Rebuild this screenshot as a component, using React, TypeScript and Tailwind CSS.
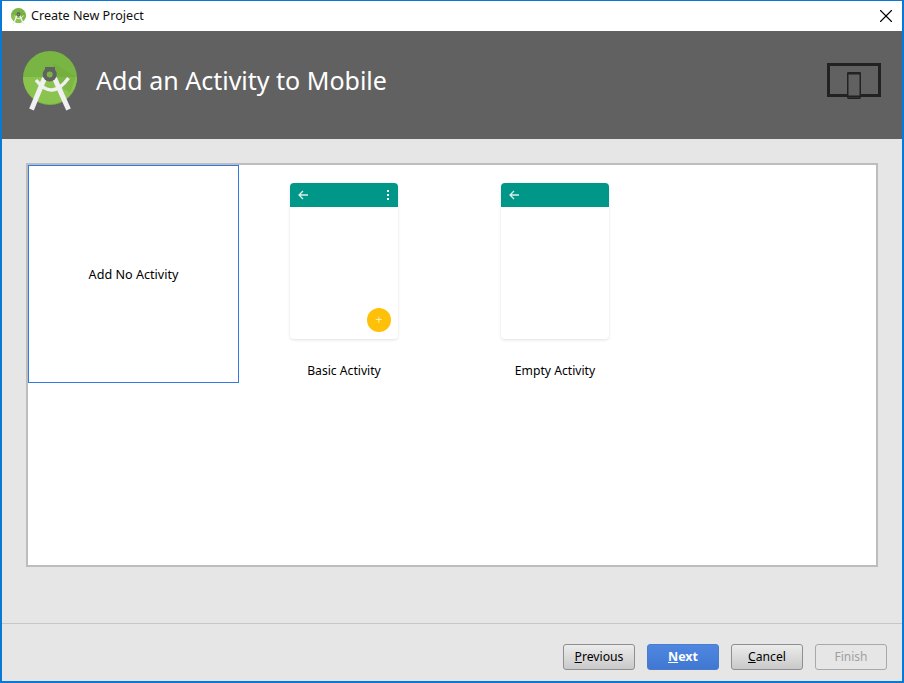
import React from 'react';
import { X } from 'lucide-react';

const font = 'font-["Noto_Sans","Open_Sans",sans-serif]';

const AndroidLogo: React.FC<{ size: number }> = ({ size }) => (
  <svg width={size} height={(size * 60) / 54} viewBox="0 0 54 60" fill="none">
    <circle cx="27" cy="27" r="27" fill="#78b543" />
    <path d="M0 26a27 27 0 0 0 54 0z" fill="#8bc34f" />
    <path d="M30 12 53 26 47 42 30 30z" fill="#6ea83c" opacity="0.45" />
    <path d="M13 29Q29 50 45.5 27" stroke="#f0f0f0" strokeWidth="3.4" />
    <path d="M21.5 27 8.5 58.5" stroke="#f0f0f0" strokeWidth="5" />
    <path d="M31.5 27 45.5 58.5" stroke="#f0f0f0" strokeWidth="5" />
    <path d="M22 16h10v5l-1 3H23l-1-3z" fill="#616161" />
    <circle cx="26.7" cy="23.5" r="7" fill="#616161" />
    <circle cx="26.7" cy="23.5" r="3" fill="#78b543" />
  </svg>
);

const DevicesIcon: React.FC = () => (
  <svg width="54" height="36" viewBox="0 0 54 36" fill="none">
    <path d="M1.5 1.5h51v31h-51z" stroke="#222" strokeWidth="3" />
    <rect x="20.75" y="9.75" width="12.5" height="25.5" rx="1" fill="#616161" stroke="#222" strokeWidth="1.5" />
    <path d="M20 10.5h14M20 33.5h14" stroke="#222" strokeWidth="2" />
  </svg>
);

const BackArrow: React.FC = () => (
  <svg width="10" height="10" viewBox="0 0 10 10" fill="none" stroke="#d9f0ec" strokeWidth="1.3">
    <path d="M10 5H1M5 1 1 5l4 4" />
  </svg>
);

const Template: React.FC<{ title: string; basic?: boolean }> = ({ title, basic }) => (
  <div className="w-[211px] h-[218px] flex flex-col items-center pt-[18px] pr-px">
    <div className="relative w-[108px] h-[156px] bg-white rounded-[4px] overflow-hidden shadow-[0_1px_3px_rgba(0,0,0,0.12)]">
      <div className="h-6 bg-[#009688] flex items-center justify-between pl-2 pr-[9px]">
        <BackArrow />
        {basic && (
          <div className="flex flex-col gap-[2px]">
            <span className="w-[2px] h-[2px] bg-white" />
            <span className="w-[2px] h-[2px] bg-white" />
            <span className="w-[2px] h-[2px] bg-white" />
          </div>
        )}
      </div>
      {basic && (
        <div className="absolute right-[7px] bottom-[7px] w-6 h-6 rounded-full bg-[#ffc107] flex items-center justify-center text-[#ffeeb5] text-[12px] leading-none">
          +
        </div>
      )}
    </div>
    <div className="mt-[23px] text-[12.15px] leading-[18px] text-black">{title}</div>
  </div>
);

const Button: React.FC<{ children: React.ReactNode; kind?: 'primary' | 'disabled' }> = ({ children, kind }) => {
  if (kind === 'primary') {
    return (
      <button className="w-[72px] h-[26px] pt-px rounded-[3px] border border-[#4a7cc7] bg-gradient-to-b from-[#4f87e0] to-[#3f77d2] text-white text-[12.5px] font-bold">
        {children}
      </button>
    );
  }
  if (kind === 'disabled') {
    return (
      <button className="w-[72px] h-[26px] pt-px rounded-[3px] border border-[#a8a8a8] bg-[#e6e6e6] text-[#a0a0a0] text-[12px]">
        {children}
      </button>
    );
  }
  return (
    <button className="w-[72px] h-[26px] pt-px rounded-[3px] border border-[#8f8f8f] bg-gradient-to-b from-[#ececec] to-[#c9c9c9] text-black text-[12.2px]">
      {children}
    </button>
  );
};

export default function App() {
  return (
    <div className={`w-[904px] h-[683px] flex flex-col overflow-hidden border-t border-x-2 border-b-2 border-[#0a78d7] bg-[#e6e6e6] ${font}`}>
      {/* Title bar */}
      <div className="h-[30px] shrink-0 bg-white flex items-center pl-[9px] pr-[5px]">
        <AndroidLogo size={15} />
        <span className="ml-[5px] text-[12.6px] text-[#111]">Create New Project</span>
        <X className="ml-auto w-[22px] h-[22px] text-black" strokeWidth={1.2} />
      </div>

      {/* Header */}
      <div className="h-[108px] shrink-0 bg-[#616161] flex items-center px-[21px] pb-[8px]">
        <AndroidLogo size={54} />
        <h1 className="ml-[19px] text-[25px] text-white font-normal">Add an Activity to Mobile</h1>
        <div className="ml-auto">
          <DevicesIcon />
        </div>
      </div>

      {/* Gallery */}
      <div className="flex-1 px-[24px] pt-[24px] pb-[56px] flex flex-col min-h-0">
        <div className="flex-1 border-2 border-[#bdbdbd] bg-white flex items-start">
          <div className="w-[211px] h-[218px] border border-[#2f7ae5] flex items-center justify-center pt-[2px] text-[12.6px] text-black">
            Add No Activity
          </div>
          <Template title="Basic Activity" basic />
          <Template title="Empty Activity" />
        </div>
      </div>

      {/* Footer */}
      <div className="h-[58px] shrink-0 border-t border-[#c6c6c6] flex items-center justify-end gap-3 pr-[15px] pt-[8px]">
        <Button><u>P</u>revious</Button>
        <Button kind="primary"><u>N</u>ext</Button>
        <Button><u>C</u>ancel</Button>
        <Button kind="disabled">Finish</Button>
      </div>
    </div>
  );
}
